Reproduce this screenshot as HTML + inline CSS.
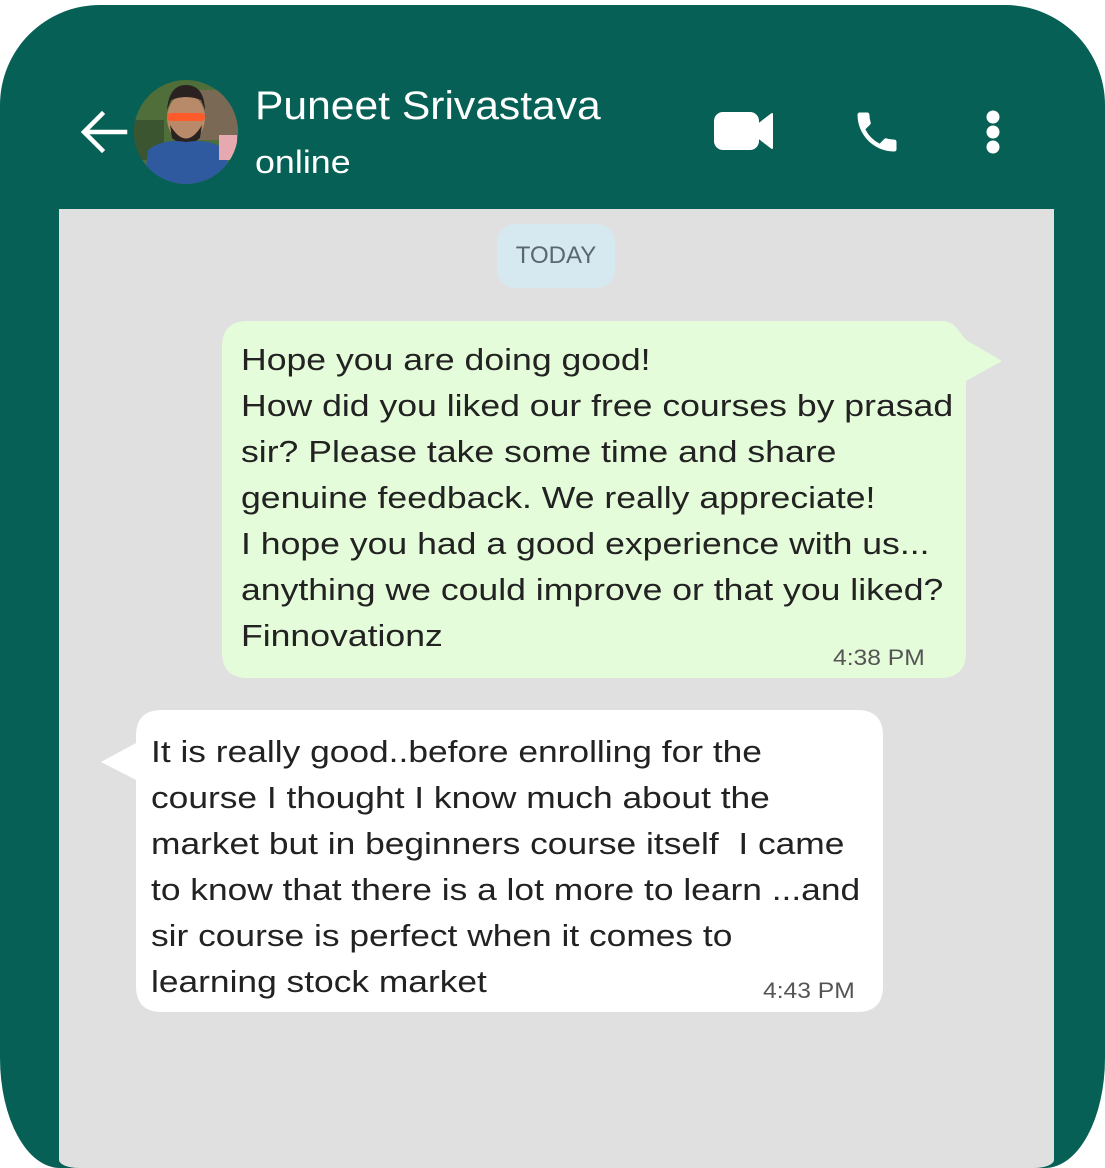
<!DOCTYPE html>
<html><head><meta charset="utf-8"><style>
*{margin:0;padding:0;box-sizing:border-box}
body{width:1105px;height:1168px;background:#fff;position:relative;overflow:hidden;font-family:"Liberation Sans",Arial,sans-serif}
.frame{position:absolute;left:0;top:5px;width:1105px;height:1163px;background:#066055;border-radius:100px 100px 60px 60px/100px 100px 110px 110px}
.chat{position:absolute;left:59px;top:209px;width:995px;height:959px;background:#e0e0e0;border-radius:0 0 20px 20px/0 0 8px 8px}
.t{position:absolute;color:#fff;white-space:nowrap;transform-origin:0 0}
.pill{position:absolute;left:497px;top:224px;width:118px;height:64px;background:#d6e8f0;border-radius:18px;color:#5b6770;font-size:24px;text-align:center;line-height:64px}
.b{position:absolute;font-size:31px;line-height:46px;color:#222;white-space:nowrap;transform-origin:0 0}
.ts{position:absolute;font-size:22px;color:#555;white-space:nowrap;transform:scaleX(1.12);transform-origin:0 0}
</style></head><body>
<div class="frame"></div>
<div class="chat"></div>
<svg style="position:absolute;left:78px;top:108px" width="50" height="48" viewBox="0 0 50 48"><path d="M47 24H8M24 6L6 24L24 42" fill="none" stroke="#fff" stroke-width="4.5" stroke-linecap="square"/></svg>
<svg style="position:absolute;left:134px;top:80px" width="104" height="104" viewBox="0 0 104 104">
<defs><clipPath id="c"><circle cx="52" cy="52" r="52"/></clipPath></defs>
<g clip-path="url(#c)">
<rect width="104" height="104" fill="#4f6e3a"/>
<rect x="60" y="10" width="44" height="50" fill="#7a6a55"/>
<rect x="0" y="40" width="30" height="40" fill="#3a5530"/>
<ellipse cx="52" cy="38" rx="19" ry="24" fill="#b98a6a"/>
<path d="M33 30Q35 5 52 5Q70 5 71 30L67 20Q52 14 37 20Z" fill="#2a2220"/>
<path d="M36 45Q52 72 68 45L66 58Q52 70 38 58Z" fill="#2a2220"/>
<rect x="33" y="33" width="38" height="8" rx="4" fill="#ff5a2a"/>
<path d="M10 104L14 70Q30 58 52 62Q76 58 92 70L96 104Z" fill="#2f5aa0"/>
<rect x="85" y="55" width="18" height="25" fill="#e7a9b0"/>
</g></svg>
<div class="t" style="left:255px;top:84px;font-size:40px;transform:scaleX(1.065)">Puneet Srivastava</div>
<div class="t" style="left:255px;top:144px;font-size:32px;transform:scaleX(1.12)">online</div>
<svg style="position:absolute;left:714px;top:112px" width="60" height="38" viewBox="0 0 60 38"><rect x="0" y="0" width="45" height="38" rx="9" fill="#fff"/><path d="M45 12L58 2V36L45 26Z" fill="#fff" stroke="#fff" stroke-width="2" stroke-linejoin="round"/></svg>
<svg style="position:absolute;left:851px;top:106px" width="52" height="52" viewBox="0 0 24 24"><path fill="#fff" d="M20 15.5c-1.25 0-2.45-.2-3.570-.57a1 1 0 0 0-1.02.24l-2.2 2.2a15.05 15.05 0 0 1-6.59-6.59l2.2-2.21a.96.96 0 0 0 .25-1A11.4 11.4 0 0 1 8.5 4a1 1 0 0 0-1-1H4a1 1 0 0 0-1 1c0 9.39 7.61 17 17 17a1 1 0 0 0 1-1v-3.5a1 1 0 0 0-1-1z"/></svg>
<svg style="position:absolute;left:984px;top:108px" width="18" height="48" viewBox="0 0 18 48"><circle cx="9" cy="9" r="6.5" fill="#fff"/><circle cx="9" cy="24" r="6.5" fill="#fff"/><circle cx="9" cy="39" r="6.5" fill="#fff"/></svg>
<div class="pill">TODAY</div>
<svg style="position:absolute;left:0;top:0" width="1105" height="1168">
<path d="M248 321H942Q952 321 958 330L966 340L1002 361L966 381V652Q966 678 940 678H248Q222 678 222 652V347Q222 321 248 321Z" fill="#e5fcda"/>
<path d="M162 710H857Q883 710 883 736V986Q883 1012 857 1012H162Q136 1012 136 986V780L101 762L136 743V736Q136 710 162 710Z" fill="#fff"/>
</svg>
<div class="b" style="left:241px;top:337px;transform:scaleX(1.148)">Hope you are doing good!<br>How did you liked our free courses by prasad<br>sir? Please take some time and share<br>genuine feedback. We really appreciate!<br>I hope you had a good experience with us...<br>anything we could improve or that you liked?<br>Finnovationz</div>
<div class="ts" style="left:833px;top:645px">4:38 PM</div>
<div class="b" style="left:151px;top:729px;transform:scaleX(1.14)">It is really good..before enrolling for the<br>course I thought I know much about the<br>market but in beginners course itself&nbsp; I came<br>to know that there is a lot more to learn ...and<br>sir course is perfect when it comes to<br>learning stock market</div>
<div class="ts" style="left:763px;top:978px">4:43 PM</div>
</body></html>
